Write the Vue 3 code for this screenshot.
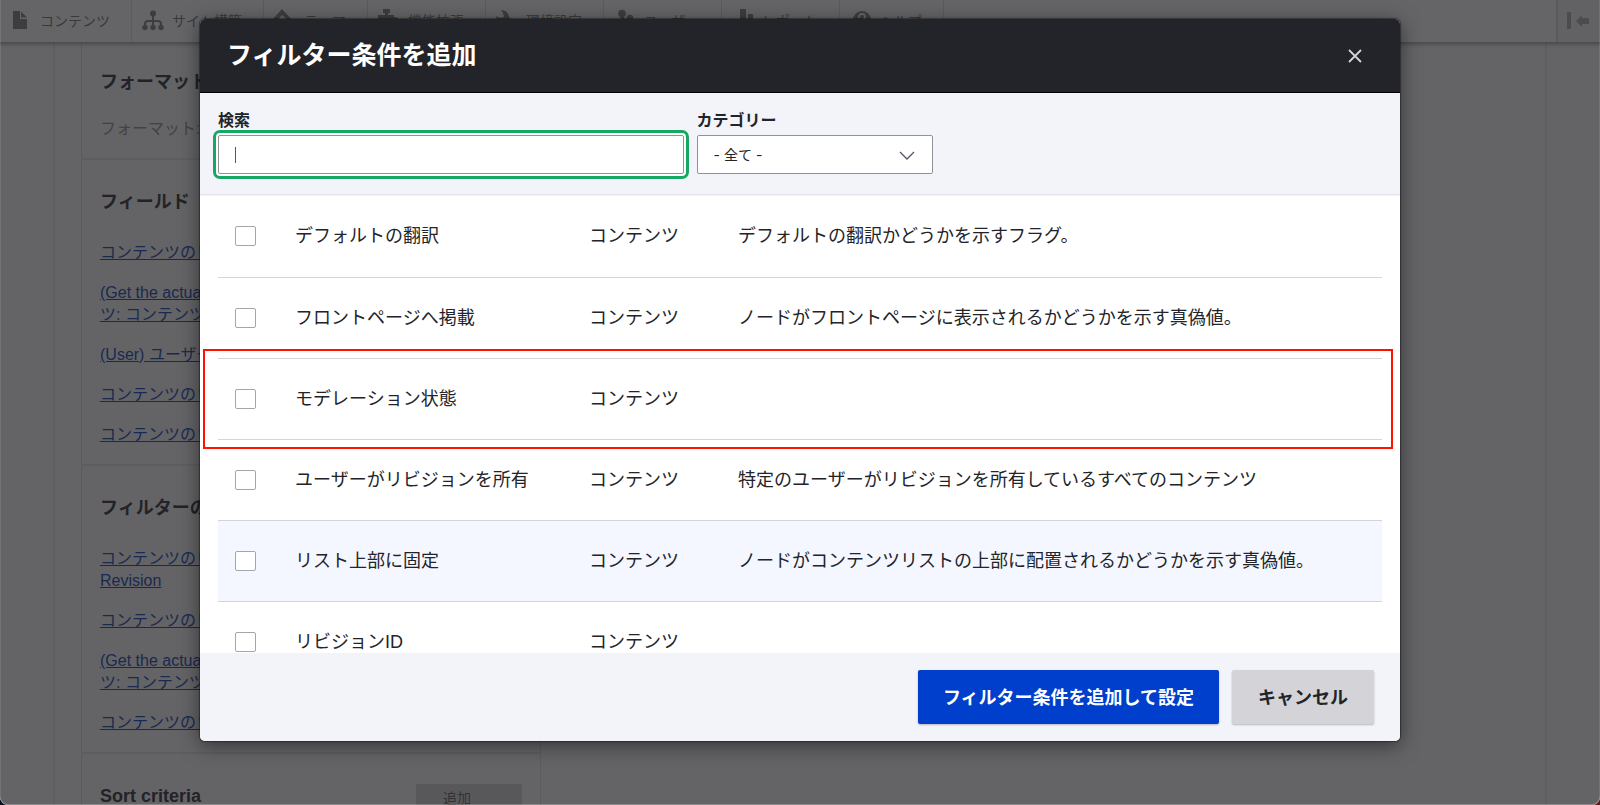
<script setup>
import { ref, onMounted } from 'vue'

const menu = [
  { icon: 'file', label: 'コンテンツ' },
  { icon: 'tree', label: 'サイト構築' },
  { icon: 'theme', label: 'テーマ' },
  { icon: 'puzzle', label: '機能拡張' },
  { icon: 'wrench', label: '環境設定' },
  { icon: 'people', label: 'ユーザー' },
  { icon: 'chart', label: 'レポート' },
  { icon: 'help', label: 'ヘルプ' },
]

const sections = [
  {
    title: 'フィールド',
    links: [
      ['コンテンツのリビジョン: コンテンツ'],
      ['(Get the actual content from a コンテン', 'ツ: コンテンツのリビジョン'],
      ['(User) ユーザー: 名前'],
      ['コンテンツのリビジョン: 変更日'],
      ['コンテンツのリビジョン: タイトル'],
    ],
  },
  {
    title: 'フィルターの条件',
    links: [
      ['コンテンツのリビジョン: Is Latest', 'Revision'],
      ['コンテンツのリビジョン: 掲載'],
      ['(Get the actual content from a コンテン', 'ツ: コンテンツタイプ'],
      ['コンテンツのリビジョン: 言語'],
    ],
  },
]

const rows = [
  { name: 'デフォルトの翻訳', text: 'デフォルトの翻訳かどうかを示すフラグ。' },
  { name: 'フロントページへ掲載', text: 'ノードがフロントページに表示されるかどうかを示す真偽値。' },
  { name: 'モデレーション状態', text: '', marked: true },
  { name: 'ユーザーがリビジョンを所有', text: '特定のユーザーがリビジョンを所有しているすべてのコンテンツ' },
  { name: 'リスト上部に固定', text: 'ノードがコンテンツリストの上部に配置されるかどうかを示す真偽値。', hover: true },
  { name: 'リビジョンID', text: '' },
]

const search = ref('')
const searchBox = ref(null)
onMounted(() => searchBox.value.focus())
</script>

<template>
  <div class="page">
    <div class="backdrop-content">
      <nav class="toolbar">
        <a v-for="m in menu" :key="m.label" href="#" class="tool">
          <svg class="tool-icon" viewBox="0 0 21 20" aria-hidden="true">
            <path v-if="m.icon === 'file'" d="M3 1h7v8h7v10H3zM11 1.500l6 6h-6z" />
            <g v-else-if="m.icon === 'tree'">
              <circle cx="11" cy="3.500" r="3" />
              <circle cx="3" cy="17.500" r="2.700" />
              <circle cx="11" cy="17.500" r="2.700" />
              <circle cx="19" cy="17.500" r="2.700" />
              <path d="M3 17v-3q0-3 3-3h10q3 0 3 3v3M11 4v13" fill="none" stroke="currentColor" stroke-width="2" />
            </g>
            <path v-else-if="m.icon === 'theme'" fill-rule="evenodd" d="M8-1l9 10-8 8q-3 3-6 0L-1 9zM5 8l5 6 4-4-6-5z" />
            <path v-else-if="m.icon === 'puzzle'" d="M5-1h7v4h-2v2h6v2q5 0 5 4t-5 3v5H0V5h7V3H5z" />
            <path v-else-if="m.icon === 'wrench'" d="M5 0Q12 0 13 7l7 9-4 4-9-7Q1 13 0 6l4 2 4-1-1-4z" />
            <g v-else-if="m.icon === 'people'">
              <circle cx="8" cy="3.500" r="3.800" />
              <circle cx="16" cy="8" r="3.300" />
              <path d="M6 6h4l1 4q10 2 10 9H1q0-8 6-9z" />
            </g>
            <path v-else-if="m.icon === 'chart'" d="M1 12h5v7H1zM8-1h6v20H8zM16 4h5v15h-5z" />
            <path v-else fill-rule="evenodd" d="M12 1a9 9 0 1 1 0 18 9 9 0 0 1 0-18zM8 8h2q0-3 2-3t2 2-3 3v3h2v-2q3-2 3-4 0-4-4-4t-4 5zm3 6v2h3v-2z" />
          </svg>
          {{ m.label }}
        </a>
        <button class="orient" aria-label="縦向き">
          <svg viewBox="0 0 22 18" aria-hidden="true">
            <path d="M0 0h4v17H0zM9 9l6-6v3h7v6h-7v3z" />
          </svg>
        </button>
      </nav>
      <main class="views">
        <div class="panel">
          <section class="bucket format">
            <h2>フォーマット</h2>
            <p>フォーマット: テーブル</p>
          </section>
          <section v-for="s in sections" :key="s.title" class="bucket">
            <h2>{{ s.title }}</h2>
            <a v-for="(l, i) in s.links" :key="i" href="#">
              <template v-for="(part, k) in l" :key="k"><br v-if="k" />{{ part }}</template>
            </a>
          </section>
          <section class="bucket sort">
            <h2>Sort criteria</h2>
            <button class="add">追加</button>
          </section>
        </div>
      </main>
    </div>

    <div class="overlay">
      <div class="dialog" role="dialog" aria-labelledby="dialog-title">
        <header class="dialog-head">
          <h1 id="dialog-title">フィルター条件を追加</h1>
          <button class="close" aria-label="閉じる">
            <svg viewBox="0 0 14 14" aria-hidden="true"><path d="M1 1l12 12M13 1L1 13" /></svg>
          </button>
        </header>
        <div class="filters">
          <div class="field search">
            <label for="search">検索</label>
            <div class="control">
              <input id="search" ref="searchBox" v-model="search" type="text" />
              <span class="caret"></span>
            </div>
          </div>
          <div class="field category">
            <label for="category">カテゴリー</label>
            <div class="control">
              <select id="category"><option>- 全て -</option></select>
              <svg viewBox="0 0 16 10" aria-hidden="true"><path d="M1 1l7 7 7-7" /></svg>
            </div>
          </div>
        </div>
        <div class="list">
          <table>
            <tbody>
              <tr v-for="(r, i) in rows" :key="r.name" :class="{ hover: r.hover, marked: r.marked }">
                <td class="c-check"><input :id="'row-' + i" type="checkbox" /></td>
                <td class="c-name"><label :for="'row-' + i">{{ r.name }}</label></td>
                <td class="c-group">コンテンツ</td>
                <td>{{ r.text }}</td>
              </tr>
            </tbody>
          </table>
        </div>
        <footer class="dialog-foot">
          <button class="btn primary">フィルター条件を追加して設定</button>
          <button class="btn">キャンセル</button>
        </footer>
      </div>
    </div>
  </div>
</template>

<style>
body {
  background: linear-gradient(90deg, #04101f 50%, #6b1712 50%);
  overflow: hidden;
}
</style>

<style scoped>
* {
  box-sizing: border-box;
}
.page {
  position: relative;
  height: 100vh;
  overflow: hidden;
  border-radius: 0 0 8px 8px;
  background: #fafafd;
  color: #232429;
  font-family: "Liberation Sans", "Noto Sans CJK JP", sans-serif;
  font-size: 16px;
}
h1,
h2,
p {
  margin: 0;
}
button,
input,
select {
  font-family: inherit;
}

/* Page behind the dialog */
.backdrop-content {
  height: 100%;
  display: flex;
  flex-direction: column;
}
.toolbar {
  display: flex;
  flex: none;
  height: 42px;
  background: #fff;
  box-shadow: 0 0 4px 2px rgba(0, 0, 0, 0.4);
  z-index: 1;
}
.tool {
  display: flex;
  align-items: center;
  gap: 9px;
  padding: 0 21px 2px 10px;
  border-right: 1px solid #ddd;
  color: #707070;
  font-size: 14px;
  text-decoration: none;
  white-space: nowrap;
}
.tool-icon {
  width: 21px;
  height: 20px;
  fill: #787878;
  color: #787878;
  overflow: visible;
}
.orient {
  margin-left: auto;
  width: 44px;
  border: 0;
  border-left: 2px solid #ddd;
  background: #f5f5f5;
  padding: 0 0 0 9px;
  text-align: left;
}
.orient svg {
  display: block;
  width: 22px;
  height: 18px;
  fill: #aaa;
}
.views {
  flex: 1;
  display: flex;
  margin: 0 53px;
  padding: 0 26px;
  border: 2px solid #e8e8ec;
  border-width: 0 2px;
}
.panel {
  width: 460px;
  border: 1px solid #dcdce2;
  border-width: 0 1px;
}
.bucket {
  display: flex;
  flex-direction: column;
  align-items: flex-start;
  gap: 18px;
  padding: 30px 18px 18px;
  border-bottom: 2px solid #e6e6ea;
  line-height: 22px;
}
.bucket h2 {
  font-size: 18px;
  line-height: 24px;
  margin-bottom: 10px;
}
.bucket p {
  color: #8a8a90;
}
.bucket a {
  color: #0036b1;
  white-space: nowrap;
}
.bucket.format {
  padding-top: 28px;
}
.bucket.format h2 {
  margin-bottom: 6px;
}
.bucket.sort {
  flex-direction: row;
  justify-content: space-between;
  border: 0;
}
.add {
  width: 106px;
  height: 28px;
  border: 0;
  border-radius: 2px;
  background: #d4d4d8;
  color: #55565b;
  font-size: 14px;
  padding: 0 24px 2px 0;
}

/* Dialog */
.overlay {
  position: absolute;
  inset: 0;
  z-index: 2;
  display: flex;
  justify-content: center;
  align-items: flex-start;
  padding-top: 19px;
  border-radius: 0 0 8px 8px;
  background: rgba(36, 36, 38, 0.7);
  box-shadow: inset 0 -1px 0 rgba(255, 255, 255, 0.25), inset 1px 0 0 rgba(255, 255, 255, 0.1), inset -1px 0 0 rgba(255, 255, 255, 0.1);
}
.dialog {
  display: flex;
  flex-direction: column;
  width: 75%;
  height: calc(100% - 64px);
  border-radius: 5px;
  background: #fff;
  overflow: hidden;
  box-shadow: 0 0 1px 1px rgba(20, 20, 26, 0.5), 0 4px 20px rgba(0, 0, 0, 0.5);
}
.dialog-head {
  flex: none;
  display: flex;
  align-items: center;
  justify-content: space-between;
  height: 74px;
  padding: 0 38px 0 27px;
  background: #232429;
  border-bottom: 1px solid #000;
  color: #fff;
}
.dialog-head h1 {
  font-size: 25px;
  line-height: 36px;
  padding-bottom: 2px;
}
.close {
  width: 14px;
  height: 14px;
  padding: 0;
  border: 0;
  background: none;
}
.close svg {
  display: block;
  fill: none;
  stroke: #d4d4d8;
  stroke-width: 1.8;
}
.filters {
  flex: none;
  display: flex;
  gap: 13px;
  height: 102px;
  padding: 16px 18px 0;
  background: #f3f4f9;
  border-bottom: 1px solid #e2e3ec;
}
.field label {
  display: block;
  font-size: 16px;
  font-weight: 700;
  line-height: 24px;
  margin-bottom: 2px;
}
.search {
  width: 40%;
}
.category {
  width: 236px;
}
.field input,
.field select {
  display: block;
  width: 100%;
  height: 39px;
  border: 1px solid #919297;
  border-radius: 2px;
  background: #fff;
  color: #232429;
  padding: 0 16px;
  font-size: 14px;
  appearance: none;
}
.field select {
  font-family: Inter, "Noto Sans CJK JP", sans-serif;
}
.field input {
  font-size: 16px;
  caret-color: transparent;
  outline: 3px solid #15a863;
  outline-offset: 2px;
  box-shadow: 0 0 0 2px #fff;
}
.control {
  position: relative;
}
.caret {
  position: absolute;
  top: 12px;
  left: 17px;
  width: 1px;
  height: 16px;
  background: #55565b;
}
.control svg {
  position: absolute;
  top: 16px;
  right: 18px;
  width: 16px;
  height: 10px;
  fill: none;
  stroke: #545560;
  stroke-width: 1.3;
  pointer-events: none;
}
.list {
  flex: 1;
  min-height: 0;
  overflow: hidden;
  padding: 0 18px;
  border-top: 1px solid #f3f4f9;
}
table {
  width: 100%;
  border-collapse: collapse;
  table-layout: fixed;
  font-size: 18px;
  line-height: 24px;
}
tr {
  position: relative;
  height: 81px;
}
tr.hover {
  background: #f4f7ff;
}
tr.marked .c-check::after {
  content: "";
  position: absolute;
  inset: -9px -11px -10px -15px;
  border: 2px solid #f10;
  pointer-events: none;
}
td {
  padding: 0;
  border-bottom: 1px solid #d4d4d8;
  white-space: nowrap;
}
.c-check {
  width: 77px;
  padding-left: 17px;
}
.c-name {
  width: 294px;
}
.c-group {
  width: 149px;
}
.c-check input {
  display: block;
  appearance: none;
  width: 21px;
  height: 20px;
  margin: 0;
  border: 1px solid #a5a6ab;
  border-radius: 2px;
  background: #fff;
}
.dialog-foot {
  flex: none;
  display: flex;
  justify-content: flex-end;
  align-items: center;
  gap: 13px;
  height: 88px;
  padding: 0 26px;
  background: #f3f4f9;
}
.btn {
  height: 54px;
  padding: 0 26px 2px;
  border: 0;
  border-radius: 2px;
  background: #d4d4d8;
  color: #232429;
  font-size: 18px;
  font-weight: 700;
  box-shadow: 0 1px 2px rgba(0, 0, 0, 0.25);
}
.btn.primary {
  background: #003ecc;
  color: #fff;
  padding: 0 25px 2px;
}
</style>
